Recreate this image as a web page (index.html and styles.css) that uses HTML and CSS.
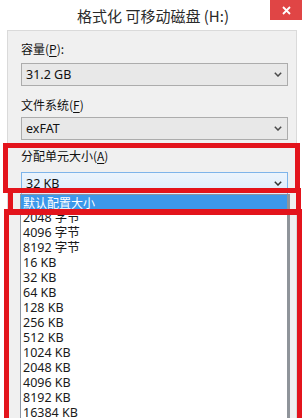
FILE: index.html
```html
<!DOCTYPE html>
<html lang="zh-CN">
<head>
<meta charset="utf-8">
<link rel="stylesheet" href="styles.css">
</head>
<body>
<div class="window">
  <div class="titlebar">
    <span class="title">格式化 可移动磁盘 (H:)</span>
    <div class="close">
      <svg width="9" height="9" viewBox="0 0 9 9"><path d="M1 1 L8 8 M8 1 L1 8" stroke="#fff" stroke-width="1.8" fill="none"/></svg>
    </div>
  </div>
  <div class="panel">
    <div class="field f1">
      <div class="label">容量(<u>P</u>):</div>
      <div class="combo"><span>31.2 GB</span><svg class="chev" width="8" height="5" viewBox="0 0 8 5"><path d="M0.8 0.8 L4 4 L7.2 0.8" stroke="#4a4a4a" stroke-width="1.5" fill="none"/></svg></div>
    </div>
    <div class="field f2">
      <div class="label">文件系统(<u>F</u>)</div>
      <div class="combo"><span>exFAT</span><svg class="chev" width="8" height="5" viewBox="0 0 8 5"><path d="M0.8 0.8 L4 4 L7.2 0.8" stroke="#4a4a4a" stroke-width="1.5" fill="none"/></svg></div>
    </div>
    <div class="field f3">
      <div class="label">分配单元大小(<u>A</u>)</div>
      <div class="combo active"><span>32 KB</span><svg class="chev" width="8" height="5" viewBox="0 0 8 5"><path d="M0.8 0.8 L4 4 L7.2 0.8" stroke="#333" stroke-width="1.5" fill="none"/></svg></div>
    </div>
  </div>
  <ul class="dropdown">
    <li class="sel">默认配置大小</li>
    <li>2048 字节</li>
    <li>4096 字节</li>
    <li>8192 字节</li>
    <li>16 KB</li>
    <li>32 KB</li>
    <li>64 KB</li>
    <li>128 KB</li>
    <li>256 KB</li>
    <li>512 KB</li>
    <li>1024 KB</li>
    <li>2048 KB</li>
    <li>4096 KB</li>
    <li>8192 KB</li>
    <li>16384 KB</li>
  </ul>
  <div class="mark mark-a"></div>
  <div class="mark mark-b"></div>
  <div class="mark mark-c"></div>
</div>
</body>
</html>
```
FILE: styles.css
```css
html, body {
  margin: 0;
  padding: 0;
  background: #fff;
}
body {
  width: 302px;
  height: 418px;
  overflow: hidden;
  font-family: "Noto Sans", "Noto Sans CJK SC", sans-serif;
  font-size: 12px;
  color: #111;
}
.window {
  position: relative;
  width: 302px;
  height: 418px;
  overflow: hidden;
}
.titlebar {
  height: 30px;
  display: flex;
  align-items: center;
  justify-content: center;
}
.title {
  font-family: "Noto Sans CJK SC", sans-serif;
  font-size: 15px;
  line-height: 18px;
  color: #2a2a2a;
  margin-left: 4px;
  margin-top: 2px;
}
.close {
  position: absolute;
  top: 0;
  right: 0;
  width: 32px;
  height: 20px;
  background: #e04545;
  display: flex;
  align-items: center;
  justify-content: center;
}
.panel {
  margin-left: 7px;
  width: 290px;
  height: 400px;
  box-sizing: border-box;
  background: #f0f0f0;
  border: 1px solid #dadada;
  padding: 10px 0 0 13px;
}
.label {
  height: 16px;
  line-height: 16px;
  font-family: "Noto Sans CJK SC", sans-serif;
  font-size: 12px;
}
.label u {
  text-underline-offset: 2px;
}
.combo {
  width: 267px;
  height: 23px;
  box-sizing: border-box;
  border: 1px solid #acacac;
  background: #e8e8e8;
  display: flex;
  align-items: center;
  justify-content: space-between;
  padding: 0 4px 0 4px;
  font-size: 12.5px;
}
.combo.active {
  border-color: #7eb4ea;
  background: linear-gradient(#ecf4fc, #dcecfc);
}
.chev {
  margin-right: 1px;
}
.f1 .label { margin-bottom: 6px; }
.f2 { margin-top: 11px; }
.f2 .label { margin-bottom: 4px; }
.f3 { margin-top: 8px; }
.f3 .label { margin-bottom: 8px; }

.dropdown {
  position: absolute;
  top: 194px;
  left: 20px;
  width: 270px;
  height: 240px;
  margin: 0;
  padding: 0;
  list-style: none;
  background: #fff;
  box-sizing: border-box;
  border: 1px solid #8a95a3;
  border-right: 3px solid #8f949a;
}
.dropdown li {
  height: 15px;
  line-height: 15px;
  padding-left: 2px;
  font-size: 12.5px;
  color: #1a1a1a;
  overflow: hidden;
}
.dropdown li.sel {
  background: #3d98ea;
  color: #fff;
  font-family: "Noto Sans CJK SC", sans-serif;
  font-size: 12px;
}
.mark {
  position: absolute;
  box-sizing: border-box;
  border: 5px solid #e3141c;
}
.mark-a {
  left: 3px;
  top: 143px;
  width: 297px;
  height: 50px;
}
.mark-b {
  left: 8px;
  top: 188px;
  width: 293px;
  height: 27px;
}
.mark-c {
  left: 4px;
  top: 209px;
  width: 298px;
  height: 215px;
}
```
